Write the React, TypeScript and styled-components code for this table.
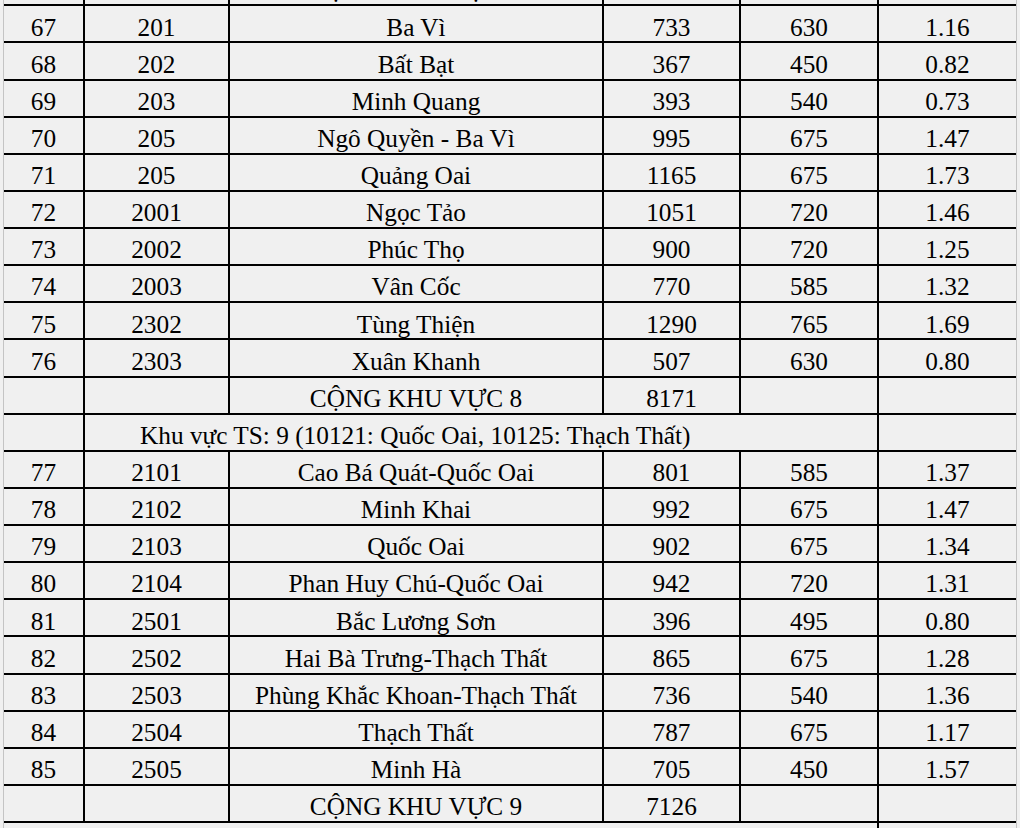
import { createGlobalStyle, styled } from 'styled-components'

const GlobalStyle = createGlobalStyle`
  html, body {
    margin: 0;
    padding: 0;
    background-color: #f0f0f0;
  }
  body {
    width: 1020px;
    height: 828px;
    overflow: hidden;
  }
`

const SheetViewport = styled.div`
  height: 828px;
  overflow: hidden;
  padding-left: 3px;
`

// grid lines come from the black background showing through the gaps
const SheetGrid = styled.div`
  display: grid;
  grid-template-columns: 79px 143px 372px 135px 136px 137px;
  grid-auto-rows: 35.13px;
  gap: 2px;
  width: 1012px;
  margin-top: -30.83px;
  background-color: #000;
  border-left: 1px solid #c4c4c4;
  border-right: 1px solid #c4c4c4;
`

const Cell = styled.div<{ $span?: number; $left?: boolean }>`
  grid-column: span ${(p) => p.$span ?? 1};
  display: flex;
  align-items: flex-end;
  justify-content: ${(p) => (p.$left ? 'flex-start' : 'center')};
  padding: 0 0 1.6px ${(p) => (p.$left ? '55px' : '0')};
  background-color: #f0f0f0;
  color: #000;
  font-family: 'Liberation Serif', 'Times New Roman', serif;
  font-size: 25.3px;
  line-height: 25.3px;
  white-space: nowrap;
  overflow: hidden;
`

type SchoolRow = [string, string, string, string, string, string]

const area8: SchoolRow[] = [
  ['67', '201', 'Ba Vì', '733', '630', '1.16'],
  ['68', '202', 'Bất Bạt', '367', '450', '0.82'],
  ['69', '203', 'Minh Quang', '393', '540', '0.73'],
  ['70', '205', 'Ngô Quyền - Ba Vì', '995', '675', '1.47'],
  ['71', '205', 'Quảng Oai', '1165', '675', '1.73'],
  ['72', '2001', 'Ngọc Tảo', '1051', '720', '1.46'],
  ['73', '2002', 'Phúc Thọ', '900', '720', '1.25'],
  ['74', '2003', 'Vân Cốc', '770', '585', '1.32'],
  ['75', '2302', 'Tùng Thiện', '1290', '765', '1.69'],
  ['76', '2303', 'Xuân Khanh', '507', '630', '0.80'],
]

const area9: SchoolRow[] = [
  ['77', '2101', 'Cao Bá Quát-Quốc Oai', '801', '585', '1.37'],
  ['78', '2102', 'Minh Khai', '992', '675', '1.47'],
  ['79', '2103', 'Quốc Oai', '902', '675', '1.34'],
  ['80', '2104', 'Phan Huy Chú-Quốc Oai', '942', '720', '1.31'],
  ['81', '2501', 'Bắc Lương Sơn', '396', '495', '0.80'],
  ['82', '2502', 'Hai Bà Trưng-Thạch Thất', '865', '675', '1.28'],
  ['83', '2503', 'Phùng Khắc Khoan-Thạch Thất', '736', '540', '1.36'],
  ['84', '2504', 'Thạch Thất', '787', '675', '1.17'],
  ['85', '2505', 'Minh Hà', '705', '450', '1.57'],
]

function DataRows(props: { rows: SchoolRow[] }) {
  const { rows } = props
  return (
    <>
      {rows.map((row) =>
        row.map((value, i) => <Cell key={row[0] + '-' + i}>{value}</Cell>)
      )}
    </>
  )
}

function TotalRow(props: { label: string; total?: string }) {
  const { label, total } = props
  return (
    <>
      <Cell />
      <Cell />
      <Cell>{label}</Cell>
      <Cell>{total}</Cell>
      <Cell />
      <Cell />
    </>
  )
}

function App() {
  return (
    <>
      <GlobalStyle />
      <SheetViewport>
        <SheetGrid>
          <TotalRow label="CỘNG KHU VỰC 7" />
          <DataRows rows={area8} />
          <TotalRow label="CỘNG KHU VỰC 8" total="8171" />
          <Cell />
          <Cell $span={4} $left>
            Khu vực TS: 9 (10121: Quốc Oai, 10125: Thạch Thất)
          </Cell>
          <Cell />
          <DataRows rows={area9} />
          <TotalRow label="CỘNG KHU VỰC 9" total="7126" />
          <Cell $span={5} />
          <Cell />
        </SheetGrid>
      </SheetViewport>
    </>
  )
}

export default App
